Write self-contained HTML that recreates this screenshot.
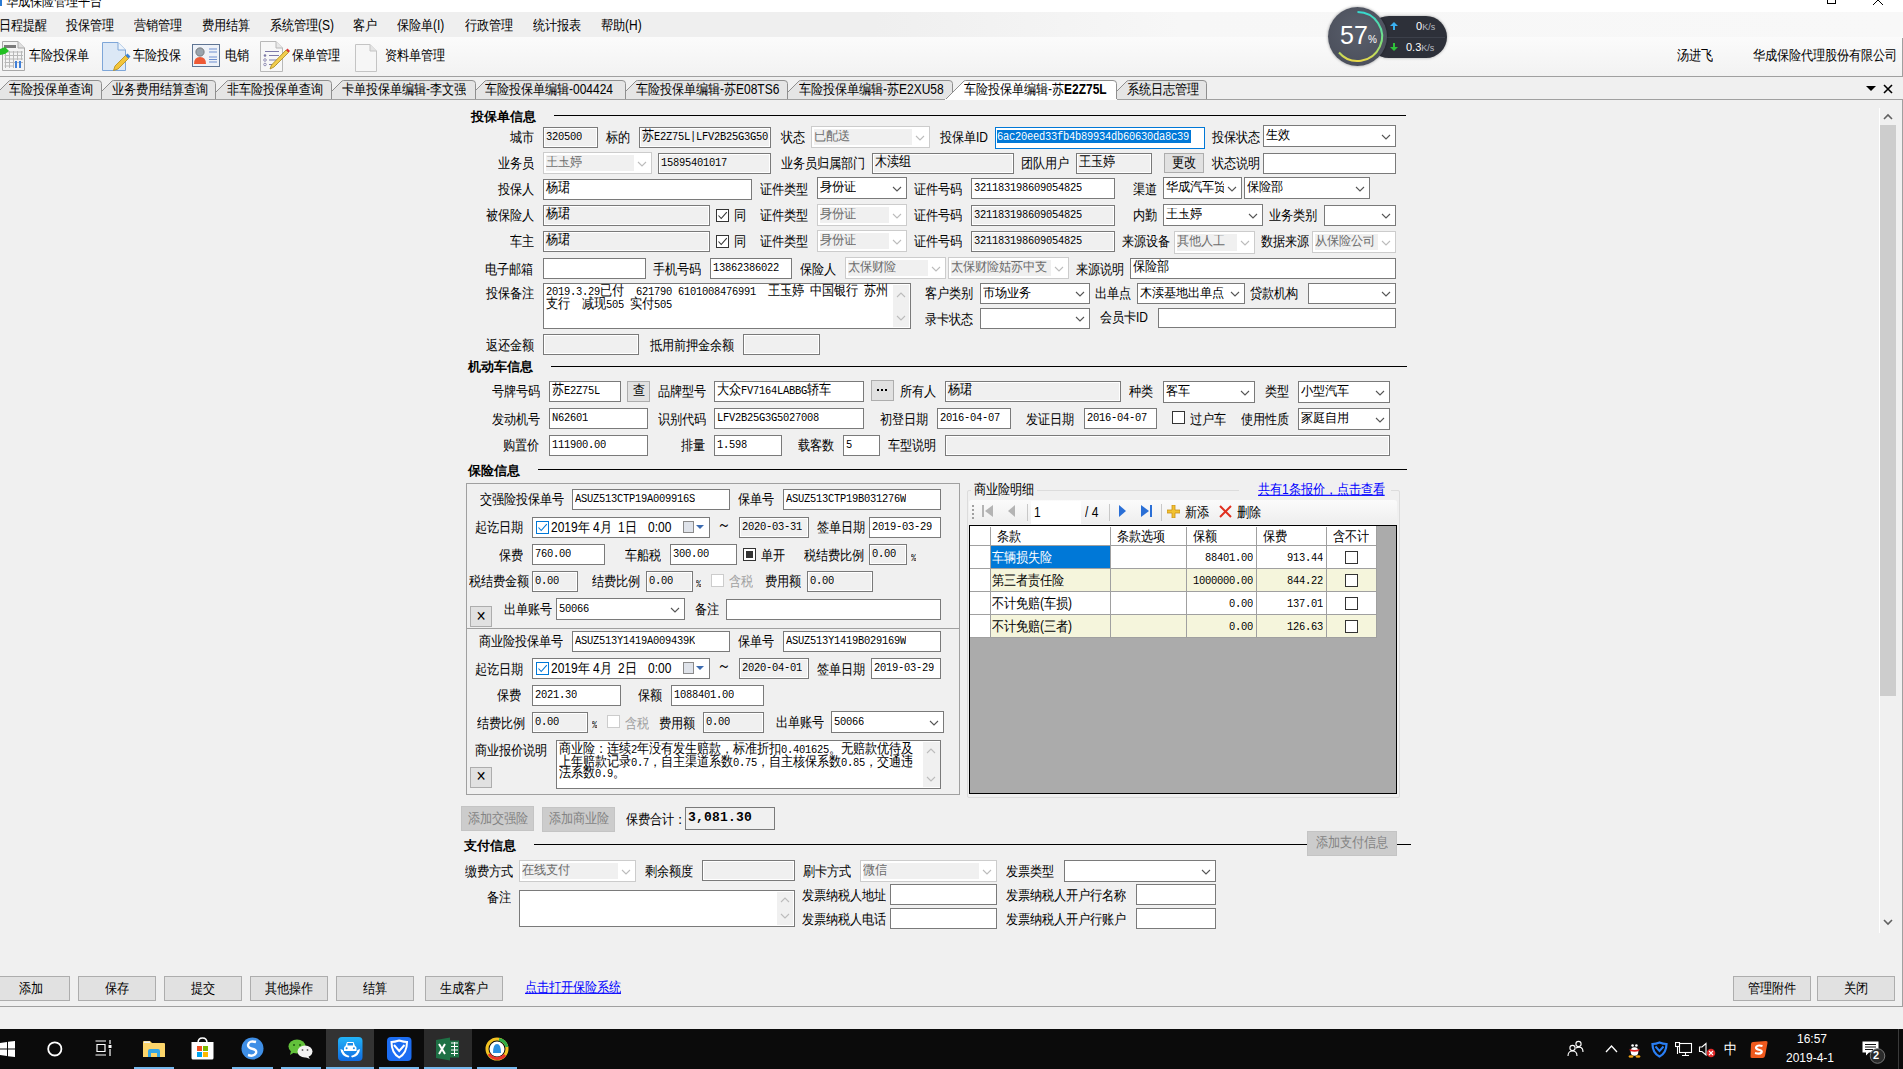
<!DOCTYPE html><html><head><meta charset="utf-8"><title>华成保险管理平台</title><style>
@font-face { font-family: "Liberation Mono"; src: local("Liberation Mono"), local("LiberationMono-Regular"); font-weight: normal; unicode-range: U+0020-007E; size-adjust: 83.4%; }
@font-face { font-family: "Liberation Mono"; src: local("Liberation Mono Bold"), local("LiberationMono-Bold"); font-weight: bold; unicode-range: U+0020-007E; size-adjust: 83.4%; }
html,body{margin:0;padding:0}
body{width:1903px;height:1069px;overflow:hidden;position:relative;background:#f0f0f0;
 font-family:"Liberation Sans",sans-serif;font-size:12px;color:#000}
.a{position:absolute;box-sizing:border-box}
div.a{white-space:pre}
.l{font-family:"Liberation Sans",sans-serif;font-size:12px;line-height:14px;transform:scaleY(1.15);transform-origin:0 50%}
.m{font-family:"Liberation Mono","Liberation Sans",sans-serif;font-size:12px;line-height:14px;transform:scaleY(1.15);transform-origin:0 50%}
.b{font-family:"Liberation Sans",sans-serif;font-size:13px;line-height:14px;font-weight:bold}
.u{text-decoration:underline;color:#0000ff}
</style></head><body><div class="a" style="left:0px;top:0px;width:1903px;height:12px;background:#ffffff;"></div>
<div class="a" style="left:0px;top:0px;width:2px;height:6px;background:#2a7bd4;"></div>
<div class="a l" style="left:6px;top:-6px;font-size:12px">华成保险管理平台</div>
<div class="a" style="left:1827px;top:-4px;width:9px;height:8px;border:1px solid #000"></div>
<svg class="a" style="left:1872px;top:-6px" width="12" height="12"><path d="M1,1 L11,11 M11,1 L1,11" stroke="#000" stroke-width="1"/></svg>
<div class="a" style="left:0;top:12px;width:1903px;height:25px;background:linear-gradient(to right,#efefef 0%,#efefef 46%,#f7f7f7 62%,#f8f8f8 100%)"></div>
<div class="a l" style="left:-1px;top:18px;">日程提醒</div>
<div class="a l" style="left:66px;top:18px;">投保管理</div>
<div class="a l" style="left:134px;top:18px;">营销管理</div>
<div class="a l" style="left:202px;top:18px;">费用结算</div>
<div class="a l" style="left:270px;top:18px;">系统管理(S)</div>
<div class="a l" style="left:353px;top:18px;">客户</div>
<div class="a l" style="left:397px;top:18px;">保险单(I)</div>
<div class="a l" style="left:465px;top:18px;">行政管理</div>
<div class="a l" style="left:533px;top:18px;">统计报表</div>
<div class="a l" style="left:601px;top:18px;">帮助(H)</div>
<div class="a" style="left:0;top:37px;width:1903px;height:39px;background:linear-gradient(#fbfbfb,#f2f2f2)"></div>
<div class="a" style="left:0px;top:76px;width:1903px;height:1px;background:#a0a0a0;"></div>
<div class="a l" style="left:29px;top:48px;">车险投保单</div>
<div class="a l" style="left:133px;top:48px;">车险投保</div>
<div class="a l" style="left:225px;top:48px;">电销</div>
<div class="a l" style="left:292px;top:48px;">保单管理</div>
<div class="a l" style="left:385px;top:48px;">资料单管理</div>
<div class="a l" style="left:1677px;top:48px;">汤进飞</div>
<div class="a l" style="left:1753px;top:48px;">华成保险代理股份有限公司</div>
<div class="a" style="left:1902px;top:38px;width:1px;height:969px;background:#a0a0a0;"></div>
<svg class="a" style="left:0px;top:40px" width="26" height="33"><path d="M2.5,1.5 H18 L24.5,8 V30.5 H2.5 Z" fill="#f4f4f4" stroke="#a8a8a8"/><path d="M18,1.5 V8 H24.5" fill="#e0e0e0" stroke="#a8a8a8"/><rect x="4" y="5" width="12" height="3" fill="#7a7a7a"/><g stroke="#b8b8b8" stroke-width="1"><path d="M4.5,12 H23 M4.5,15.5 H23 M4.5,19 H23 M4.5,22.5 H23 M4.5,26 H14"/><path d="M5.5,11 V28 M9.5,11 V28 M13.5,11 V28 M17.5,11 V20 M21.5,11 V20"/></g><rect x="15" y="21" width="2" height="7" fill="#3f7fd8"/><rect x="19" y="21" width="2" height="7" fill="#3f7fd8"/><path d="M0,9 L5,7 L9,11 L5,14 L0,15 Z" fill="#22c022"/></svg>
<svg class="a" style="left:101px;top:41px" width="31" height="31"><path d="M1.5,1.5 H17 L24.5,9 V29.5 H1.5 Z" fill="#dce8f6" stroke="#7ea6d8"/><path d="M17,1.5 V9 H24.5" fill="#eef4fb" stroke="#7ea6d8"/><path d="M12.5,29.5 L14,25 L24.5,14.5 L27.5,17.5 L17,28 Z" fill="#f3c53a" stroke="#b58a12" stroke-width="0.8"/><path d="M24.5,14.5 L26.5,12.5 L29.5,15.5 L27.5,17.5 Z" fill="#3b82d6"/></svg>
<svg class="a" style="left:192px;top:44px" width="29" height="24"><rect x="0.5" y="0.5" width="27" height="22" fill="#eef2f8" stroke="#5f7594"/><circle cx="8" cy="8" r="4.2" fill="#9aa4ad" stroke="#555" stroke-width="0.6"/><path d="M2,20 Q2,13 8,13 Q14,13 14,20 Z" fill="#ee5a36"/><g stroke="#6f8fd0" stroke-width="1"><path d="M17,5 H25 M17,8 H25 M17,13 H25 M17,15.5 H25 M17,18 H25"/></g></svg>
<svg class="a" style="left:259px;top:40px" width="32" height="33"><path d="M1.5,1.5 H17 L23.5,8 V31.5 H1.5 Z" fill="#f7f7f7" stroke="#b8b8b8"/><path d="M17,1.5 V8 H23.5" fill="#e8e8e8" stroke="#b8b8b8"/><g stroke="#7d7aa8" stroke-width="1.2"><path d="M6,11.5 H20 M10,15.5 H20 M10,20 H18 M10,24.5 H18"/></g><circle cx="6" cy="15.5" r="1.3" fill="#7d7aa8"/><circle cx="6" cy="20" r="1.3" fill="none" stroke="#7d7aa8" stroke-width="0.8"/><circle cx="6" cy="24.5" r="1.3" fill="none" stroke="#7d7aa8" stroke-width="0.8"/><path d="M11,29 L12.5,25 L27,10 L29.5,12.5 L15,27 Z" fill="#f1cd4e" stroke="#a8861a" stroke-width="0.8"/><path d="M27,10 L28.5,8.5 L31,11 L29.5,12.5 Z" fill="#d33"/></svg>
<svg class="a" style="left:354px;top:43px" width="25" height="30"><path d="M1.5,1.5 H16 L22.5,8 V28.5 H1.5 Z" fill="#f6f6f6" stroke="#c4c4c4"/><path d="M16,1.5 V8 H22.5" fill="#e4e4e4" stroke="#c4c4c4"/></svg>
<div class="a" style="left:1368px;top:16px;width:79px;height:42px;border-radius:21px;background:#2d3039;box-shadow:0 0 3px rgba(0,0,0,0.35)"></div>
<div class="a" style="left:1384px;top:37px;width:61px;height:1px;background:#3c404a;"></div>
<div class="a" style="left:1328px;top:7px;width:59px;height:59px;border-radius:50%;background:radial-gradient(circle at 50% 40%,#5a5f6c,#474b57);box-shadow:0 0 3px rgba(0,0,0,0.4)"></div>
<svg class="a" style="left:1328px;top:7px" width="59" height="59"><defs><linearGradient id="ag" x1="0" y1="0" x2="0" y2="1"><stop offset="0" stop-color="#35d9d0"/><stop offset="0.6" stop-color="#7de07a"/><stop offset="1" stop-color="#e8d84a"/></linearGradient></defs><path d="M29.5,5 A24.5,24.5 0 1 1 11,45.5" fill="none" stroke="url(#ag)" stroke-width="2"/></svg>
<div class="a" style="left:1340px;top:21px;font-family:'Liberation Sans',sans-serif;font-size:25px;line-height:28px;color:#fff;font-weight:normal">57</div>
<div class="a" style="left:1368px;top:34px;font-family:'Liberation Sans',sans-serif;font-size:10px;line-height:12px;color:#fff">%</div>
<svg class="a" style="left:1390px;top:22px" width="8" height="8"><path d="M4,0 L8,4 H5 V8 H3 V4 H0 Z" fill="#3ab0f0"/></svg>
<svg class="a" style="left:1390px;top:43px" width="8" height="8"><path d="M4,8 L8,4 H5 V0 H3 V4 H0 Z" fill="#2fc23a"/></svg>
<div class="a" style="left:1416px;top:20px;font-family:'Liberation Sans',sans-serif;font-size:11px;line-height:13px;color:#fff">0<span style="font-size:9px;color:#b8bcc4">K/s</span></div>
<div class="a" style="left:1406px;top:41px;font-family:'Liberation Sans',sans-serif;font-size:11px;line-height:13px;color:#fff">0.3<span style="font-size:9px;color:#b8bcc4">K/s</span></div>
<div class="a" style="left:0px;top:77px;width:1903px;height:23px;background:#f0f0f0;"></div>
<svg class="a" style="left:1108px;top:79px" width="100" height="22"><path d="M0.5,20.5 L18,3 Q19,1.5 20.5,1.5 L95,1.5 Q98.5,1.5 98.5,4.5 L98.5,20.5 Z" fill="#e5e5e5" stroke="none"/><path d="M0.5,20.5 L18,3 Q19,1.5 20.5,1.5 L95,1.5 Q98.5,1.5 98.5,4.5 L98.5,20.5" fill="none" stroke="#8f8f8f" stroke-width="1"/></svg>
<div class="a l" style="left:1127px;top:82px;">系统日志管理</div>
<svg class="a" style="left:780px;top:79px" width="174" height="22"><path d="M0.5,20.5 L18,3 Q19,1.5 20.5,1.5 L169,1.5 Q172.5,1.5 172.5,4.5 L172.5,20.5 Z" fill="#e5e5e5" stroke="none"/><path d="M0.5,20.5 L18,3 Q19,1.5 20.5,1.5 L169,1.5 Q172.5,1.5 172.5,4.5 L172.5,20.5" fill="none" stroke="#8f8f8f" stroke-width="1"/></svg>
<div class="a l" style="left:799px;top:82px;">车险投保单编辑-苏E2XU58</div>
<svg class="a" style="left:617px;top:79px" width="172" height="22"><path d="M0.5,20.5 L18,3 Q19,1.5 20.5,1.5 L167,1.5 Q170.5,1.5 170.5,4.5 L170.5,20.5 Z" fill="#e5e5e5" stroke="none"/><path d="M0.5,20.5 L18,3 Q19,1.5 20.5,1.5 L167,1.5 Q170.5,1.5 170.5,4.5 L170.5,20.5" fill="none" stroke="#8f8f8f" stroke-width="1"/></svg>
<div class="a l" style="left:636px;top:82px;">车险投保单编辑-苏E08TS6</div>
<svg class="a" style="left:466px;top:79px" width="161" height="22"><path d="M0.5,20.5 L18,3 Q19,1.5 20.5,1.5 L156,1.5 Q159.5,1.5 159.5,4.5 L159.5,20.5 Z" fill="#e5e5e5" stroke="none"/><path d="M0.5,20.5 L18,3 Q19,1.5 20.5,1.5 L156,1.5 Q159.5,1.5 159.5,4.5 L159.5,20.5" fill="none" stroke="#8f8f8f" stroke-width="1"/></svg>
<div class="a l" style="left:485px;top:82px;">车险投保单编辑-004424</div>
<svg class="a" style="left:323px;top:79px" width="154" height="22"><path d="M0.5,20.5 L18,3 Q19,1.5 20.5,1.5 L149,1.5 Q152.5,1.5 152.5,4.5 L152.5,20.5 Z" fill="#e5e5e5" stroke="none"/><path d="M0.5,20.5 L18,3 Q19,1.5 20.5,1.5 L149,1.5 Q152.5,1.5 152.5,4.5 L152.5,20.5" fill="none" stroke="#8f8f8f" stroke-width="1"/></svg>
<div class="a l" style="left:342px;top:82px;">卡单投保单编辑-李文强</div>
<svg class="a" style="left:208px;top:79px" width="125" height="22"><path d="M0.5,20.5 L18,3 Q19,1.5 20.5,1.5 L120,1.5 Q123.5,1.5 123.5,4.5 L123.5,20.5 Z" fill="#e5e5e5" stroke="none"/><path d="M0.5,20.5 L18,3 Q19,1.5 20.5,1.5 L120,1.5 Q123.5,1.5 123.5,4.5 L123.5,20.5" fill="none" stroke="#8f8f8f" stroke-width="1"/></svg>
<div class="a l" style="left:227px;top:82px;">非车险投保单查询</div>
<svg class="a" style="left:93px;top:79px" width="124" height="22"><path d="M0.5,20.5 L18,3 Q19,1.5 20.5,1.5 L119,1.5 Q122.5,1.5 122.5,4.5 L122.5,20.5 Z" fill="#e5e5e5" stroke="none"/><path d="M0.5,20.5 L18,3 Q19,1.5 20.5,1.5 L119,1.5 Q122.5,1.5 122.5,4.5 L122.5,20.5" fill="none" stroke="#8f8f8f" stroke-width="1"/></svg>
<div class="a l" style="left:112px;top:82px;">业务费用结算查询</div>
<svg class="a" style="left:-10px;top:79px" width="113" height="22"><path d="M0.5,20.5 L18,3 Q19,1.5 20.5,1.5 L108,1.5 Q111.5,1.5 111.5,4.5 L111.5,20.5 Z" fill="#e5e5e5" stroke="none"/><path d="M0.5,20.5 L18,3 Q19,1.5 20.5,1.5 L108,1.5 Q111.5,1.5 111.5,4.5 L111.5,20.5" fill="none" stroke="#8f8f8f" stroke-width="1"/></svg>
<div class="a l" style="left:9px;top:82px;">车险投保单查询</div>
<svg class="a" style="left:945px;top:79px" width="173" height="22"><path d="M0.5,20.5 L18,3 Q19,1.5 20.5,1.5 L168,1.5 Q171.5,1.5 171.5,4.5 L171.5,20.5 Z" fill="#ffffff" stroke="none"/><path d="M0.5,20.5 L18,3 Q19,1.5 20.5,1.5 L168,1.5 Q171.5,1.5 171.5,4.5 L171.5,20.5" fill="none" stroke="#8f8f8f" stroke-width="1"/></svg>
<div class="a l" style="left:964px;top:82px">车险投保单编辑-苏<b>E2Z75L</b></div>
<div class="a" style="left:0px;top:99px;width:1903px;height:1px;background:#a0a0a0;"></div>
<div class="a" style="left:945px;top:99px;width:172px;height:1px;background:#ffffff;"></div>
<svg class="a" style="left:1866px;top:86px" width="10" height="6"><path d="M0,0 L10,0 L5,5 Z" fill="#000"/></svg>
<svg class="a" style="left:1883px;top:84px" width="10" height="10"><path d="M1,1 L9,9 M9,1 L1,9" stroke="#000" stroke-width="1.6"/></svg>
<div class="a b" style="left:471px;top:110px;">投保单信息</div>
<div class="a" style="left:554px;top:115px;width:852px;height:1px;background:#000;"></div>
<div class="a l" style="left:510px;top:130px;">城市</div>
<div class="a" style="left:543px;top:127px;width:55px;height:21px;background:#f0f0f0;border:1px solid #7a7a7a;box-shadow:inset 0 0 0 1px #fff"></div>
<div class="a m" style="left:546px;top:131px;">320500</div>
<div class="a l" style="left:606px;top:130px;">标的</div>
<div class="a" style="left:639px;top:127px;width:132px;height:21px;background:#f0f0f0;border:1px solid #7a7a7a;box-shadow:inset 0 0 0 1px #fff"></div>
<div class="a m" style="left:642px;top:131px;">苏E2Z75L|LFV2B25G3G50</div>
<div class="a l" style="left:781px;top:130px;">状态</div>
<div class="a" style="left:811px;top:126px;width:119px;height:22px;background:#fff;border:1px solid #cccccc;"></div>
<div class="a" style="left:814px;top:129px;width:98px;height:16px;background:#f0f0f0;"></div>
<svg class="a" style="left:915.0px;top:134.5px" width="10" height="7"><polyline points="1,1 5.0,5 9,1" fill="none" stroke="#bcbcbc" stroke-width="1.1"/></svg>
<div class="a m" style="left:814px;top:131px;color:#6d6d6d;max-width:98px;overflow:hidden">已配送</div>
<div class="a l" style="left:940px;top:130px;">投保单ID</div>
<div class="a" style="left:995px;top:127px;width:210px;height:22px;background:#fff;border:1px solid #0078d7;"></div>
<div class="a" style="left:997px;top:130px;width:194px;height:13px;background:#0078d7;"></div>
<div class="a m" style="left:997px;top:131px;color:#fff;">6ac20eed33fb4b89934db60630da8c39</div>
<div class="a l" style="left:1212px;top:130px;">投保状态</div>
<div class="a" style="left:1263px;top:125px;width:133px;height:22px;background:#fff;border:1px solid #7a7a7a;"></div>
<svg class="a" style="left:1381.0px;top:133.5px" width="10" height="7"><polyline points="1,1 5.0,5 9,1" fill="none" stroke="#555" stroke-width="1.1"/></svg>
<div class="a m" style="left:1266px;top:130px;max-width:112px;overflow:hidden">生效</div>
<div class="a l" style="left:498px;top:156px;">业务员</div>
<div class="a" style="left:543px;top:152px;width:109px;height:22px;background:#fff;border:1px solid #cccccc;"></div>
<div class="a" style="left:546px;top:155px;width:88px;height:16px;background:#f0f0f0;"></div>
<svg class="a" style="left:637.0px;top:160.5px" width="10" height="7"><polyline points="1,1 5.0,5 9,1" fill="none" stroke="#bcbcbc" stroke-width="1.1"/></svg>
<div class="a m" style="left:546px;top:157px;color:#6d6d6d;max-width:88px;overflow:hidden">王玉婷</div>
<div class="a" style="left:658px;top:153px;width:113px;height:21px;background:#f0f0f0;border:1px solid #7a7a7a;box-shadow:inset 0 0 0 1px #fff"></div>
<div class="a m" style="left:661px;top:157px;">15895401017</div>
<div class="a l" style="left:781px;top:156px;">业务员归属部门</div>
<div class="a" style="left:872px;top:153px;width:142px;height:21px;background:#f0f0f0;border:1px solid #7a7a7a;box-shadow:inset 0 0 0 1px #fff"></div>
<div class="a m" style="left:875px;top:157px;">木渎组</div>
<div class="a l" style="left:1021px;top:156px;">团队用户</div>
<div class="a" style="left:1076px;top:153px;width:76px;height:21px;background:#f0f0f0;border:1px solid #7a7a7a;box-shadow:inset 0 0 0 1px #fff"></div>
<div class="a m" style="left:1079px;top:157px;">王玉婷</div>
<div class="a" style="left:1164px;top:153px;width:40px;height:20px;background:#e1e1e1;border:1px solid #adadad;"></div>
<div class="a l" style="left:1164px;top:155px;width:40px;text-align:center;color:#000">更改</div>
<div class="a l" style="left:1212px;top:156px;">状态说明</div>
<div class="a" style="left:1263px;top:153px;width:133px;height:21px;background:#fff;border:1px solid #7a7a7a;"></div>
<div class="a l" style="left:498px;top:182px;">投保人</div>
<div class="a" style="left:543px;top:179px;width:209px;height:21px;background:#fff;border:1px solid #7a7a7a;"></div>
<div class="a m" style="left:546px;top:183px;">杨珺</div>
<div class="a l" style="left:760px;top:182px;">证件类型</div>
<div class="a" style="left:817px;top:177px;width:90px;height:22px;background:#fff;border:1px solid #7a7a7a;"></div>
<svg class="a" style="left:892.0px;top:185.5px" width="10" height="7"><polyline points="1,1 5.0,5 9,1" fill="none" stroke="#555" stroke-width="1.1"/></svg>
<div class="a m" style="left:820px;top:182px;max-width:69px;overflow:hidden">身份证</div>
<div class="a l" style="left:914px;top:182px;">证件号码</div>
<div class="a" style="left:971px;top:178px;width:144px;height:21px;background:#fff;border:1px solid #7a7a7a;"></div>
<div class="a m" style="left:974px;top:182px;">321183198609054825</div>
<div class="a l" style="left:1133px;top:182px;">渠道</div>
<div class="a" style="left:1163px;top:177px;width:79px;height:22px;background:#fff;border:1px solid #7a7a7a;"></div>
<svg class="a" style="left:1227.0px;top:185.5px" width="10" height="7"><polyline points="1,1 5.0,5 9,1" fill="none" stroke="#555" stroke-width="1.1"/></svg>
<div class="a m" style="left:1166px;top:182px;max-width:58px;overflow:hidden">华成汽车贸</div>
<div class="a" style="left:1244px;top:177px;width:126px;height:22px;background:#fff;border:1px solid #7a7a7a;"></div>
<svg class="a" style="left:1355.0px;top:185.5px" width="10" height="7"><polyline points="1,1 5.0,5 9,1" fill="none" stroke="#555" stroke-width="1.1"/></svg>
<div class="a m" style="left:1247px;top:182px;max-width:105px;overflow:hidden">保险部</div>
<div class="a l" style="left:486px;top:208px;">被保险人</div>
<div class="a" style="left:543px;top:205px;width:167px;height:21px;background:#f0f0f0;border:1px solid #7a7a7a;box-shadow:inset 0 0 0 1px #fff"></div>
<div class="a m" style="left:546px;top:209px;">杨珺</div>
<div class="a" style="left:716px;top:209px;width:13px;height:13px;border:1px solid #333;background:#fff"></div>
<svg class="a" style="left:716px;top:209px" width="13" height="13"><polyline points="2.5,6.5 5.2,9.5 10.8,3.2" fill="none" stroke="#333" stroke-width="1.1"/></svg>
<div class="a l" style="left:734px;top:208px;">同</div>
<div class="a l" style="left:760px;top:208px;">证件类型</div>
<div class="a" style="left:817px;top:204px;width:90px;height:22px;background:#fff;border:1px solid #cccccc;"></div>
<div class="a" style="left:820px;top:207px;width:69px;height:16px;background:#f0f0f0;"></div>
<svg class="a" style="left:892.0px;top:212.5px" width="10" height="7"><polyline points="1,1 5.0,5 9,1" fill="none" stroke="#bcbcbc" stroke-width="1.1"/></svg>
<div class="a m" style="left:820px;top:209px;color:#6d6d6d;max-width:69px;overflow:hidden">身份证</div>
<div class="a l" style="left:914px;top:208px;">证件号码</div>
<div class="a" style="left:971px;top:205px;width:144px;height:21px;background:#f0f0f0;border:1px solid #7a7a7a;box-shadow:inset 0 0 0 1px #fff"></div>
<div class="a m" style="left:974px;top:209px;">321183198609054825</div>
<div class="a l" style="left:1133px;top:208px;">内勤</div>
<div class="a" style="left:1163px;top:204px;width:100px;height:22px;background:#fff;border:1px solid #7a7a7a;"></div>
<svg class="a" style="left:1248.0px;top:212.5px" width="10" height="7"><polyline points="1,1 5.0,5 9,1" fill="none" stroke="#555" stroke-width="1.1"/></svg>
<div class="a m" style="left:1166px;top:209px;max-width:79px;overflow:hidden">王玉婷</div>
<div class="a l" style="left:1269px;top:208px;">业务类别</div>
<div class="a" style="left:1324px;top:205px;width:72px;height:21px;background:#fff;border:1px solid #7a7a7a;"></div>
<svg class="a" style="left:1381.0px;top:213.0px" width="10" height="7"><polyline points="1,1 5.0,5 9,1" fill="none" stroke="#555" stroke-width="1.1"/></svg>
<div class="a l" style="left:510px;top:234px;">车主</div>
<div class="a" style="left:543px;top:231px;width:167px;height:21px;background:#f0f0f0;border:1px solid #7a7a7a;box-shadow:inset 0 0 0 1px #fff"></div>
<div class="a m" style="left:546px;top:235px;">杨珺</div>
<div class="a" style="left:716px;top:235px;width:13px;height:13px;border:1px solid #333;background:#fff"></div>
<svg class="a" style="left:716px;top:235px" width="13" height="13"><polyline points="2.5,6.5 5.2,9.5 10.8,3.2" fill="none" stroke="#333" stroke-width="1.1"/></svg>
<div class="a l" style="left:734px;top:234px;">同</div>
<div class="a l" style="left:760px;top:234px;">证件类型</div>
<div class="a" style="left:817px;top:230px;width:90px;height:22px;background:#fff;border:1px solid #cccccc;"></div>
<div class="a" style="left:820px;top:233px;width:69px;height:16px;background:#f0f0f0;"></div>
<svg class="a" style="left:892.0px;top:238.5px" width="10" height="7"><polyline points="1,1 5.0,5 9,1" fill="none" stroke="#bcbcbc" stroke-width="1.1"/></svg>
<div class="a m" style="left:820px;top:235px;color:#6d6d6d;max-width:69px;overflow:hidden">身份证</div>
<div class="a l" style="left:914px;top:234px;">证件号码</div>
<div class="a" style="left:971px;top:231px;width:144px;height:21px;background:#f0f0f0;border:1px solid #7a7a7a;box-shadow:inset 0 0 0 1px #fff"></div>
<div class="a m" style="left:974px;top:235px;">321183198609054825</div>
<div class="a l" style="left:1122px;top:234px;">来源设备</div>
<div class="a" style="left:1174px;top:231px;width:81px;height:23px;background:#fff;border:1px solid #cccccc;"></div>
<div class="a" style="left:1177px;top:234px;width:60px;height:17px;background:#f0f0f0;"></div>
<svg class="a" style="left:1240.0px;top:240.0px" width="10" height="7"><polyline points="1,1 5.0,5 9,1" fill="none" stroke="#bcbcbc" stroke-width="1.1"/></svg>
<div class="a m" style="left:1177px;top:236px;color:#6d6d6d;max-width:60px;overflow:hidden">其他人工</div>
<div class="a l" style="left:1261px;top:234px;">数据来源</div>
<div class="a" style="left:1312px;top:231px;width:84px;height:22px;background:#fff;border:1px solid #cccccc;"></div>
<div class="a" style="left:1315px;top:234px;width:63px;height:16px;background:#f0f0f0;"></div>
<svg class="a" style="left:1381.0px;top:239.5px" width="10" height="7"><polyline points="1,1 5.0,5 9,1" fill="none" stroke="#bcbcbc" stroke-width="1.1"/></svg>
<div class="a m" style="left:1315px;top:236px;color:#6d6d6d;max-width:63px;overflow:hidden">从保险公司</div>
<div class="a l" style="left:485px;top:262px;">电子邮箱</div>
<div class="a" style="left:543px;top:258px;width:103px;height:21px;background:#fff;border:1px solid #7a7a7a;"></div>
<div class="a l" style="left:653px;top:262px;">手机号码</div>
<div class="a" style="left:710px;top:258px;width:82px;height:21px;background:#fff;border:1px solid #7a7a7a;"></div>
<div class="a m" style="left:713px;top:262px;">13862386022</div>
<div class="a l" style="left:800px;top:262px;">保险人</div>
<div class="a" style="left:845px;top:257px;width:101px;height:22px;background:#fff;border:1px solid #cccccc;"></div>
<div class="a" style="left:848px;top:260px;width:80px;height:16px;background:#f0f0f0;"></div>
<svg class="a" style="left:931.0px;top:265.5px" width="10" height="7"><polyline points="1,1 5.0,5 9,1" fill="none" stroke="#bcbcbc" stroke-width="1.1"/></svg>
<div class="a m" style="left:848px;top:262px;color:#6d6d6d;max-width:80px;overflow:hidden">太保财险</div>
<div class="a" style="left:948px;top:257px;width:121px;height:22px;background:#fff;border:1px solid #cccccc;"></div>
<div class="a" style="left:951px;top:260px;width:100px;height:16px;background:#f0f0f0;"></div>
<svg class="a" style="left:1054.0px;top:265.5px" width="10" height="7"><polyline points="1,1 5.0,5 9,1" fill="none" stroke="#bcbcbc" stroke-width="1.1"/></svg>
<div class="a m" style="left:951px;top:262px;color:#6d6d6d;max-width:100px;overflow:hidden">太保财险姑苏中支</div>
<div class="a l" style="left:1076px;top:262px;">来源说明</div>
<div class="a" style="left:1130px;top:258px;width:266px;height:21px;background:#fff;border:1px solid #7a7a7a;"></div>
<div class="a m" style="left:1133px;top:262px;">保险部</div>
<div class="a l" style="left:486px;top:286px;">投保备注</div>
<div class="a" style="left:543px;top:283px;width:368px;height:46px;background:#fff;border:1px solid #7a7a7a;"></div>
<div class="a m" style="left:546px;top:286px;line-height:11px;width:345px;white-space:pre-wrap;transform-origin:0 0">2019.3.29已付  621790 6101008476991  王玉婷 中国银行 苏州
支行  减现505 实付505</div>
<div class="a" style="left:893px;top:285px;width:16px;height:42px;background:#f0f0f0;"></div>
<svg class="a" style="left:895.5px;top:292.0px" width="10" height="7"><polyline points="1,5 5.0,1 9,5" fill="none" stroke="#bcbcbc" stroke-width="1.1"/></svg>
<svg class="a" style="left:896px;top:315px" width="10" height="6"><polyline points="1,1 5,5 9,1" fill="none" stroke="#bcbcbc" stroke-width="1.1"/></svg>
<div class="a l" style="left:925px;top:286px;">客户类别</div>
<div class="a" style="left:980px;top:283px;width:110px;height:21px;background:#fff;border:1px solid #7a7a7a;"></div>
<svg class="a" style="left:1075.0px;top:291.0px" width="10" height="7"><polyline points="1,1 5.0,5 9,1" fill="none" stroke="#555" stroke-width="1.1"/></svg>
<div class="a m" style="left:983px;top:288px;max-width:89px;overflow:hidden">市场业务</div>
<div class="a l" style="left:1095px;top:286px;">出单点</div>
<div class="a" style="left:1137px;top:283px;width:108px;height:21px;background:#fff;border:1px solid #7a7a7a;"></div>
<svg class="a" style="left:1230.0px;top:291.0px" width="10" height="7"><polyline points="1,1 5.0,5 9,1" fill="none" stroke="#555" stroke-width="1.1"/></svg>
<div class="a m" style="left:1140px;top:288px;max-width:87px;overflow:hidden">木渎基地出单点</div>
<div class="a l" style="left:1250px;top:286px;">贷款机构</div>
<div class="a" style="left:1308px;top:283px;width:88px;height:21px;background:#fff;border:1px solid #7a7a7a;"></div>
<svg class="a" style="left:1381.0px;top:291.0px" width="10" height="7"><polyline points="1,1 5.0,5 9,1" fill="none" stroke="#555" stroke-width="1.1"/></svg>
<div class="a l" style="left:925px;top:312px;">录卡状态</div>
<div class="a" style="left:980px;top:308px;width:110px;height:21px;background:#fff;border:1px solid #7a7a7a;"></div>
<svg class="a" style="left:1075.0px;top:316.0px" width="10" height="7"><polyline points="1,1 5.0,5 9,1" fill="none" stroke="#555" stroke-width="1.1"/></svg>
<div class="a l" style="left:1100px;top:310px;">会员卡ID</div>
<div class="a" style="left:1158px;top:308px;width:238px;height:20px;background:#fff;border:1px solid #7a7a7a;"></div>
<div class="a l" style="left:486px;top:338px;">返还金额</div>
<div class="a" style="left:543px;top:334px;width:96px;height:21px;background:#f0f0f0;border:1px solid #7a7a7a;box-shadow:inset 0 0 0 1px #fff"></div>
<div class="a l" style="left:650px;top:338px;">抵用前押金余额</div>
<div class="a" style="left:743px;top:334px;width:77px;height:21px;background:#f0f0f0;border:1px solid #7a7a7a;box-shadow:inset 0 0 0 1px #fff"></div>
<div class="a b" style="left:468px;top:360px;">机动车信息</div>
<div class="a" style="left:551px;top:366px;width:856px;height:1px;background:#000;"></div>
<div class="a l" style="left:492px;top:384px;">号牌号码</div>
<div class="a" style="left:549px;top:381px;width:72px;height:21px;background:#fff;border:1px solid #7a7a7a;"></div>
<div class="a m" style="left:552px;top:385px;">苏E2Z75L</div>
<div class="a" style="left:627px;top:381px;width:23px;height:21px;background:#e1e1e1;border:1px solid #adadad;"></div>
<div class="a l" style="left:627px;top:383px;width:23px;text-align:center;color:#000">查</div>
<div class="a l" style="left:658px;top:384px;">品牌型号</div>
<div class="a" style="left:714px;top:381px;width:150px;height:21px;background:#fff;border:1px solid #7a7a7a;"></div>
<div class="a m" style="left:717px;top:385px;">大众FV7164LABBG轿车</div>
<div class="a" style="left:871px;top:380px;width:23px;height:21px;background:#e1e1e1;border:1px solid #adadad;"></div>
<div class="a l" style="left:871px;top:383px;width:23px;text-align:center;color:#000"></div>
<div class="a" style="left:877px;top:389px;width:2px;height:2px;background:#000;"></div>
<div class="a" style="left:881px;top:389px;width:2px;height:2px;background:#000;"></div>
<div class="a" style="left:885px;top:389px;width:2px;height:2px;background:#000;"></div>
<div class="a l" style="left:900px;top:384px;">所有人</div>
<div class="a" style="left:945px;top:381px;width:176px;height:21px;background:#f0f0f0;border:1px solid #7a7a7a;box-shadow:inset 0 0 0 1px #fff"></div>
<div class="a m" style="left:948px;top:385px;">杨珺</div>
<div class="a l" style="left:1129px;top:384px;">种类</div>
<div class="a" style="left:1163px;top:381px;width:92px;height:22px;background:#fff;border:1px solid #7a7a7a;"></div>
<svg class="a" style="left:1240.0px;top:389.5px" width="10" height="7"><polyline points="1,1 5.0,5 9,1" fill="none" stroke="#555" stroke-width="1.1"/></svg>
<div class="a m" style="left:1166px;top:386px;max-width:71px;overflow:hidden">客车</div>
<div class="a l" style="left:1265px;top:384px;">类型</div>
<div class="a" style="left:1298px;top:381px;width:92px;height:22px;background:#fff;border:1px solid #7a7a7a;"></div>
<svg class="a" style="left:1375.0px;top:389.5px" width="10" height="7"><polyline points="1,1 5.0,5 9,1" fill="none" stroke="#555" stroke-width="1.1"/></svg>
<div class="a m" style="left:1301px;top:386px;max-width:71px;overflow:hidden">小型汽车</div>
<div class="a l" style="left:492px;top:412px;">发动机号</div>
<div class="a" style="left:549px;top:408px;width:99px;height:21px;background:#fff;border:1px solid #7a7a7a;"></div>
<div class="a m" style="left:552px;top:412px;">N62601</div>
<div class="a l" style="left:658px;top:412px;">识别代码</div>
<div class="a" style="left:714px;top:408px;width:150px;height:21px;background:#fff;border:1px solid #7a7a7a;"></div>
<div class="a m" style="left:717px;top:412px;">LFV2B25G3G5027008</div>
<div class="a l" style="left:880px;top:412px;">初登日期</div>
<div class="a" style="left:937px;top:408px;width:74px;height:21px;background:#fff;border:1px solid #7a7a7a;"></div>
<div class="a m" style="left:940px;top:412px;">2016-04-07</div>
<div class="a l" style="left:1026px;top:412px;">发证日期</div>
<div class="a" style="left:1084px;top:408px;width:73px;height:21px;background:#fff;border:1px solid #7a7a7a;"></div>
<div class="a m" style="left:1087px;top:412px;">2016-04-07</div>
<div class="a" style="left:1172px;top:411px;width:13px;height:13px;border:1px solid #333;background:#fff"></div>
<div class="a l" style="left:1190px;top:412px;">过户车</div>
<div class="a l" style="left:1241px;top:412px;">使用性质</div>
<div class="a" style="left:1298px;top:408px;width:92px;height:22px;background:#fff;border:1px solid #7a7a7a;"></div>
<svg class="a" style="left:1375.0px;top:416.5px" width="10" height="7"><polyline points="1,1 5.0,5 9,1" fill="none" stroke="#555" stroke-width="1.1"/></svg>
<div class="a m" style="left:1301px;top:413px;max-width:71px;overflow:hidden">家庭自用</div>
<div class="a l" style="left:503px;top:438px;">购置价</div>
<div class="a" style="left:549px;top:435px;width:99px;height:21px;background:#fff;border:1px solid #7a7a7a;"></div>
<div class="a m" style="left:552px;top:439px;">111900.00</div>
<div class="a l" style="left:681px;top:438px;">排量</div>
<div class="a" style="left:714px;top:435px;width:68px;height:21px;background:#fff;border:1px solid #7a7a7a;"></div>
<div class="a m" style="left:717px;top:439px;">1.598</div>
<div class="a l" style="left:798px;top:438px;">载客数</div>
<div class="a" style="left:843px;top:435px;width:37px;height:21px;background:#fff;border:1px solid #7a7a7a;"></div>
<div class="a m" style="left:846px;top:439px;">5</div>
<div class="a l" style="left:888px;top:438px;">车型说明</div>
<div class="a" style="left:945px;top:435px;width:445px;height:21px;background:#f0f0f0;border:1px solid #7a7a7a;box-shadow:inset 0 0 0 1px #fff"></div>
<div class="a b" style="left:468px;top:464px;">保险信息</div>
<div class="a" style="left:538px;top:469px;width:869px;height:1px;background:#000;"></div>
<div class="a" style="left:466px;top:483px;width:494px;height:312px;background:transparent;border:1px solid #a0a0a0;"></div>
<div class="a" style="left:466px;top:628px;width:494px;height:1px;background:#a0a0a0;"></div>
<div class="a l" style="left:480px;top:492px;">交强险投保单号</div>
<div class="a" style="left:572px;top:489px;width:158px;height:21px;background:#fff;border:1px solid #7a7a7a;"></div>
<div class="a m" style="left:575px;top:493px;">ASUZ513CTP19A009916S</div>
<div class="a l" style="left:738px;top:492px;">保单号</div>
<div class="a" style="left:783px;top:489px;width:158px;height:21px;background:#fff;border:1px solid #7a7a7a;"></div>
<div class="a m" style="left:786px;top:493px;">ASUZ513CTP19B031276W</div>
<div class="a l" style="left:475px;top:520px;">起讫日期</div>
<div class="a" style="left:532px;top:517px;width:178px;height:21px;background:#fff;border:1px solid #7a7a7a;"></div>
<div class="a" style="left:536px;top:521px;width:13px;height:13px;border:1px solid #0078d7;background:#fff"></div>
<svg class="a" style="left:536px;top:521px" width="13" height="13"><polyline points="2.5,6.5 5.2,9.5 10.8,3.2" fill="none" stroke="#0078d7" stroke-width="1.1"/></svg>
<div class="a l" style="left:551px;top:520px;">2019年</div>
<div class="a l" style="left:593px;top:520px;">4月</div>
<div class="a l" style="left:618px;top:520px;">1日</div>
<div class="a l" style="left:648px;top:520px;">0:00</div>
<div class="a" style="left:683px;top:521px;width:11px;height:12px;border:1px solid #8a8a8a;background:#dfe3ea"></div>
<svg class="a" style="left:696px;top:525px" width="8" height="5"><path d="M0,0 L8,0 L4,4 Z" fill="#3c6bb0"/></svg>
<div class="a l" style="left:717px;top:517px;font-size:14px">～</div>
<div class="a" style="left:739px;top:517px;width:70px;height:21px;background:#f0f0f0;border:1px solid #7a7a7a;box-shadow:inset 0 0 0 1px #fff"></div>
<div class="a m" style="left:742px;top:521px;">2020-03-31</div>
<div class="a l" style="left:817px;top:520px;">签单日期</div>
<div class="a" style="left:869px;top:517px;width:72px;height:21px;background:#fff;border:1px solid #7a7a7a;"></div>
<div class="a m" style="left:872px;top:521px;">2019-03-29</div>
<div class="a l" style="left:499px;top:548px;">保费</div>
<div class="a" style="left:532px;top:544px;width:73px;height:21px;background:#fff;border:1px solid #7a7a7a;"></div>
<div class="a m" style="left:535px;top:548px;">760.00</div>
<div class="a l" style="left:625px;top:548px;">车船税</div>
<div class="a" style="left:670px;top:544px;width:67px;height:21px;background:#fff;border:1px solid #7a7a7a;"></div>
<div class="a m" style="left:673px;top:548px;">300.00</div>
<div class="a" style="left:743px;top:548px;width:13px;height:13px;border:1px solid #333;background:#fff"></div>
<div class="a" style="left:746px;top:551px;width:7px;height:7px;background:#333;"></div>
<div class="a l" style="left:761px;top:548px;">单开</div>
<div class="a l" style="left:804px;top:548px;">税结费比例</div>
<div class="a" style="left:869px;top:544px;width:38px;height:21px;background:#f0f0f0;border:1px solid #7a7a7a;box-shadow:inset 0 0 0 1px #fff"></div>
<div class="a m" style="left:872px;top:548px;">0.00</div>
<div class="a m" style="left:911px;top:552px;font-size:10px">%</div>
<div class="a l" style="left:469px;top:574px;">税结费金额</div>
<div class="a" style="left:532px;top:571px;width:46px;height:21px;background:#f0f0f0;border:1px solid #7a7a7a;box-shadow:inset 0 0 0 1px #fff"></div>
<div class="a m" style="left:535px;top:575px;">0.00</div>
<div class="a l" style="left:592px;top:574px;">结费比例</div>
<div class="a" style="left:646px;top:571px;width:47px;height:21px;background:#f0f0f0;border:1px solid #7a7a7a;box-shadow:inset 0 0 0 1px #fff"></div>
<div class="a m" style="left:649px;top:575px;">0.00</div>
<div class="a m" style="left:696px;top:578px;font-size:10px">%</div>
<div class="a" style="left:711px;top:574px;width:13px;height:13px;border:1px solid #cccccc;background:#fff"></div>
<div class="a l" style="left:729px;top:574px;color:#a0a0a0;">含税</div>
<div class="a l" style="left:765px;top:574px;">费用额</div>
<div class="a" style="left:807px;top:571px;width:66px;height:21px;background:#f0f0f0;border:1px solid #7a7a7a;box-shadow:inset 0 0 0 1px #fff"></div>
<div class="a m" style="left:810px;top:575px;">0.00</div>
<div class="a" style="left:470px;top:606px;width:22px;height:21px;background:#e1e1e1;border:1px solid #adadad;"></div>
<div class="a l" style="left:470px;top:609px;width:22px;text-align:center;color:#000">✕</div>
<div class="a l" style="left:504px;top:602px;">出单账号</div>
<div class="a" style="left:556px;top:598px;width:129px;height:22px;background:#fff;border:1px solid #7a7a7a;"></div>
<svg class="a" style="left:670.0px;top:606.5px" width="10" height="7"><polyline points="1,1 5.0,5 9,1" fill="none" stroke="#555" stroke-width="1.1"/></svg>
<div class="a m" style="left:559px;top:603px;max-width:108px;overflow:hidden">50066</div>
<div class="a l" style="left:695px;top:602px;">备注</div>
<div class="a" style="left:726px;top:599px;width:215px;height:21px;background:#fff;border:1px solid #7a7a7a;"></div>
<div class="a l" style="left:479px;top:634px;">商业险投保单号</div>
<div class="a" style="left:572px;top:631px;width:158px;height:21px;background:#fff;border:1px solid #7a7a7a;"></div>
<div class="a m" style="left:575px;top:635px;">ASUZ513Y1419A009439K</div>
<div class="a l" style="left:738px;top:634px;">保单号</div>
<div class="a" style="left:783px;top:631px;width:158px;height:21px;background:#fff;border:1px solid #7a7a7a;"></div>
<div class="a m" style="left:786px;top:635px;">ASUZ513Y1419B029169W</div>
<div class="a l" style="left:475px;top:662px;">起讫日期</div>
<div class="a" style="left:532px;top:658px;width:178px;height:21px;background:#fff;border:1px solid #7a7a7a;"></div>
<div class="a" style="left:536px;top:662px;width:13px;height:13px;border:1px solid #0078d7;background:#fff"></div>
<svg class="a" style="left:536px;top:662px" width="13" height="13"><polyline points="2.5,6.5 5.2,9.5 10.8,3.2" fill="none" stroke="#0078d7" stroke-width="1.1"/></svg>
<div class="a l" style="left:551px;top:661px;">2019年</div>
<div class="a l" style="left:593px;top:661px;">4月</div>
<div class="a l" style="left:618px;top:661px;">2日</div>
<div class="a l" style="left:648px;top:661px;">0:00</div>
<div class="a" style="left:683px;top:662px;width:11px;height:12px;border:1px solid #8a8a8a;background:#dfe3ea"></div>
<svg class="a" style="left:696px;top:666px" width="8" height="5"><path d="M0,0 L8,0 L4,4 Z" fill="#3c6bb0"/></svg>
<div class="a l" style="left:717px;top:658px;font-size:14px">～</div>
<div class="a" style="left:739px;top:658px;width:70px;height:21px;background:#f0f0f0;border:1px solid #7a7a7a;box-shadow:inset 0 0 0 1px #fff"></div>
<div class="a m" style="left:742px;top:662px;">2020-04-01</div>
<div class="a l" style="left:817px;top:662px;">签单日期</div>
<div class="a" style="left:871px;top:658px;width:70px;height:21px;background:#fff;border:1px solid #7a7a7a;"></div>
<div class="a m" style="left:874px;top:662px;">2019-03-29</div>
<div class="a l" style="left:497px;top:688px;">保费</div>
<div class="a" style="left:532px;top:685px;width:89px;height:21px;background:#fff;border:1px solid #7a7a7a;"></div>
<div class="a m" style="left:535px;top:689px;">2021.30</div>
<div class="a l" style="left:638px;top:688px;">保额</div>
<div class="a" style="left:671px;top:685px;width:93px;height:21px;background:#fff;border:1px solid #7a7a7a;"></div>
<div class="a m" style="left:674px;top:689px;">1088401.00</div>
<div class="a l" style="left:477px;top:716px;">结费比例</div>
<div class="a" style="left:532px;top:712px;width:56px;height:21px;background:#f0f0f0;border:1px solid #7a7a7a;box-shadow:inset 0 0 0 1px #fff"></div>
<div class="a m" style="left:535px;top:716px;">0.00</div>
<div class="a m" style="left:592px;top:719px;font-size:10px">%</div>
<div class="a" style="left:607px;top:715px;width:13px;height:13px;border:1px solid #cccccc;background:#fff"></div>
<div class="a l" style="left:625px;top:716px;color:#a0a0a0;">含税</div>
<div class="a l" style="left:659px;top:716px;">费用额</div>
<div class="a" style="left:703px;top:712px;width:61px;height:21px;background:#f0f0f0;border:1px solid #7a7a7a;box-shadow:inset 0 0 0 1px #fff"></div>
<div class="a m" style="left:706px;top:716px;">0.00</div>
<div class="a l" style="left:776px;top:715px;">出单账号</div>
<div class="a" style="left:831px;top:711px;width:113px;height:22px;background:#fff;border:1px solid #7a7a7a;"></div>
<svg class="a" style="left:929.0px;top:719.5px" width="10" height="7"><polyline points="1,1 5.0,5 9,1" fill="none" stroke="#555" stroke-width="1.1"/></svg>
<div class="a m" style="left:834px;top:716px;max-width:92px;overflow:hidden">50066</div>
<div class="a l" style="left:475px;top:743px;">商业报价说明</div>
<div class="a" style="left:470px;top:767px;width:22px;height:21px;background:#e1e1e1;border:1px solid #adadad;"></div>
<div class="a l" style="left:470px;top:769px;width:22px;text-align:center;color:#000">✕</div>
<div class="a" style="left:556px;top:740px;width:385px;height:49px;background:#fff;border:1px solid #7a7a7a;"></div>
<div class="a m" style="left:559px;top:745px;line-height:10.7px;width:362px;white-space:pre-wrap;transform-origin:0 0">商业险：连续2年没有发生赔款，标准折扣0.401625。无赔款优待及
上年赔款记录0.7，自主渠道系数0.75，自主核保系数0.85，交通违
法系数0.9。</div>
<div class="a" style="left:923px;top:742px;width:17px;height:45px;background:#f0f0f0;"></div>
<svg class="a" style="left:925.5px;top:748.0px" width="10" height="7"><polyline points="1,5 5.0,1 9,5" fill="none" stroke="#bcbcbc" stroke-width="1.1"/></svg>
<svg class="a" style="left:926px;top:776px" width="10" height="6"><polyline points="1,1 5,5 9,1" fill="none" stroke="#bcbcbc" stroke-width="1.1"/></svg>
<div class="a" style="left:967px;top:490px;width:433px;height:308px;border:1px solid #dcdcdc;border-radius:2px"></div>
<div class="a" style="left:971px;top:484px;width:66px;height:13px;background:#f0f0f0;"></div>
<div class="a l" style="left:974px;top:482px;">商业险明细</div>
<div class="a" style="left:1239px;top:484px;width:152px;height:13px;background:#f0f0f0;"></div>
<div class="a l u" style="left:1258px;top:482px;font-size:12px">共有1条报价，点击查看</div>
<div class="a" style="left:969px;top:500px;width:428px;height:24px;background:linear-gradient(#fbfbfb,#eeeeee);border-radius:3px"></div>
<div class="a" style="left:972px;top:505px;width:2px;height:2px;background:#a0a0a0;"></div>
<div class="a" style="left:972px;top:509px;width:2px;height:2px;background:#a0a0a0;"></div>
<div class="a" style="left:972px;top:513px;width:2px;height:2px;background:#a0a0a0;"></div>
<div class="a" style="left:972px;top:517px;width:2px;height:2px;background:#a0a0a0;"></div>
<svg class="a" style="left:982px;top:505px" width="12" height="12"><rect x="0" y="0" width="2" height="12" fill="#b4b4b4"/><path d="M11,0 L3,6 L11,12 Z" fill="#b4b4b4"/></svg>
<svg class="a" style="left:1008px;top:505px" width="8" height="12"><path d="M7,0 L0,6 L7,12 Z" fill="#b4b4b4"/></svg>
<div class="a" style="left:1027px;top:504px;width:1px;height:17px;background:#c8c8c8;"></div>
<div class="a" style="left:1031px;top:501px;width:50px;height:23px;background:#ffffff;"></div>
<div class="a l" style="left:1034px;top:505px;">1</div>
<div class="a l" style="left:1085px;top:505px;">/ 4</div>
<div class="a" style="left:1109px;top:504px;width:1px;height:17px;background:#c8c8c8;"></div>
<svg class="a" style="left:1119px;top:505px" width="8" height="12"><path d="M0,0 L7,6 L0,12 Z" fill="#2a6fd6"/></svg>
<svg class="a" style="left:1141px;top:505px" width="12" height="12"><path d="M0,0 L8,6 L0,12 Z" fill="#2a6fd6"/><rect x="9" y="0" width="2" height="12" fill="#2a6fd6"/></svg>
<div class="a" style="left:1161px;top:504px;width:1px;height:17px;background:#c8c8c8;"></div>
<svg class="a" style="left:1167px;top:505px" width="13" height="13"><path d="M5,0 H8 V5 H13 V8 H8 V13 H5 V8 H0 V5 H5 Z" fill="#f2c230" stroke="#c8901a" stroke-width="0.8"/></svg>
<div class="a l" style="left:1185px;top:505px;">新添</div>
<svg class="a" style="left:1219px;top:505px" width="13" height="13"><path d="M1,1 L12,12 M12,1 L1,12" stroke="#e03020" stroke-width="2"/></svg>
<div class="a l" style="left:1237px;top:505px;">删除</div>
<div class="a" style="left:969px;top:525px;width:428px;height:269px;background:#ababab;border:1px solid #000;"></div>
<div class="a" style="left:970px;top:526px;width:407px;height:112px;background:#ffffff;"></div>
<div class="a" style="left:970px;top:545px;width:407px;height:1px;background:#a0a0a0;"></div>
<div class="a" style="left:990px;top:527px;width:1px;height:111px;background:#a0a0a0;"></div>
<div class="a" style="left:1110px;top:527px;width:1px;height:111px;background:#a0a0a0;"></div>
<div class="a" style="left:1186px;top:527px;width:1px;height:111px;background:#a0a0a0;"></div>
<div class="a" style="left:1256px;top:527px;width:1px;height:111px;background:#a0a0a0;"></div>
<div class="a" style="left:1326px;top:527px;width:1px;height:111px;background:#a0a0a0;"></div>
<div class="a" style="left:1376px;top:526px;width:1px;height:112px;background:#a0a0a0;"></div>
<div class="a l" style="left:997px;top:529px;">条款</div>
<div class="a l" style="left:1117px;top:529px;">条款选项</div>
<div class="a l" style="left:1193px;top:529px;">保额</div>
<div class="a l" style="left:1263px;top:529px;">保费</div>
<div class="a l" style="left:1333px;top:529px;">含不计</div>
<div class="a" style="left:991px;top:546px;width:119px;height:23px;background:#0078d7;"></div>
<div class="a" style="left:970px;top:568px;width:407px;height:1px;background:#a0a0a0;"></div>
<div class="a l" style="left:992px;top:550px;color:#fff;">车辆损失险</div>
<div class="a m" style="left:1111px;top:552px;width:142px;text-align:right">88401.00</div>
<div class="a m" style="left:1187px;top:552px;width:136px;text-align:right">913.44</div>
<div class="a" style="left:1345px;top:551px;width:13px;height:13px;border:1px solid #333;background:#fff"></div>
<div class="a" style="left:991px;top:569px;width:385px;height:23px;background:#f5f5dc;"></div>
<div class="a" style="left:1110px;top:569px;width:1px;height:23px;background:#a0a0a0;"></div>
<div class="a" style="left:1186px;top:569px;width:1px;height:23px;background:#a0a0a0;"></div>
<div class="a" style="left:1256px;top:569px;width:1px;height:23px;background:#a0a0a0;"></div>
<div class="a" style="left:1326px;top:569px;width:1px;height:23px;background:#a0a0a0;"></div>
<div class="a" style="left:970px;top:591px;width:407px;height:1px;background:#a0a0a0;"></div>
<div class="a l" style="left:992px;top:573px;">第三者责任险</div>
<div class="a m" style="left:1111px;top:575px;width:142px;text-align:right">1000000.00</div>
<div class="a m" style="left:1187px;top:575px;width:136px;text-align:right">844.22</div>
<div class="a" style="left:1345px;top:574px;width:13px;height:13px;border:1px solid #333;background:#fff"></div>
<div class="a" style="left:970px;top:614px;width:407px;height:1px;background:#a0a0a0;"></div>
<div class="a l" style="left:992px;top:596px;">不计免赔(车损)</div>
<div class="a m" style="left:1111px;top:598px;width:142px;text-align:right">0.00</div>
<div class="a m" style="left:1187px;top:598px;width:136px;text-align:right">137.01</div>
<div class="a" style="left:1345px;top:597px;width:13px;height:13px;border:1px solid #333;background:#fff"></div>
<div class="a" style="left:991px;top:615px;width:385px;height:23px;background:#f5f5dc;"></div>
<div class="a" style="left:1110px;top:615px;width:1px;height:23px;background:#a0a0a0;"></div>
<div class="a" style="left:1186px;top:615px;width:1px;height:23px;background:#a0a0a0;"></div>
<div class="a" style="left:1256px;top:615px;width:1px;height:23px;background:#a0a0a0;"></div>
<div class="a" style="left:1326px;top:615px;width:1px;height:23px;background:#a0a0a0;"></div>
<div class="a" style="left:970px;top:637px;width:407px;height:1px;background:#a0a0a0;"></div>
<div class="a l" style="left:992px;top:619px;">不计免赔(三者)</div>
<div class="a m" style="left:1111px;top:621px;width:142px;text-align:right">0.00</div>
<div class="a m" style="left:1187px;top:621px;width:136px;text-align:right">126.63</div>
<div class="a" style="left:1345px;top:620px;width:13px;height:13px;border:1px solid #333;background:#fff"></div>
<div class="a" style="left:461px;top:806px;width:73px;height:25px;background:#cccccc;border:1px solid #c4c4c4;"></div>
<div class="a l" style="left:461px;top:811px;width:73px;text-align:center;color:#838383">添加交强险</div>
<div class="a" style="left:542px;top:807px;width:73px;height:25px;background:#cccccc;border:1px solid #c4c4c4;"></div>
<div class="a l" style="left:542px;top:811px;width:73px;text-align:center;color:#838383">添加商业险</div>
<div class="a l" style="left:626px;top:812px;">保费合计：</div>
<div class="a" style="left:685px;top:807px;width:90px;height:23px;background:#f0f0f0;border:1px solid #7a7a7a;"></div>
<div class="a" style="left:688px;top:811px;font-family:'Liberation Mono',monospace;font-weight:bold;font-size:15.6px;line-height:14px">3,081.30</div>
<div class="a b" style="left:464px;top:839px;">支付信息</div>
<div class="a" style="left:534px;top:844px;width:877px;height:1px;background:#000;"></div>
<div class="a" style="left:1307px;top:831px;width:90px;height:25px;background:#cccccc;border:1px solid #c4c4c4;"></div>
<div class="a l" style="left:1307px;top:835px;width:90px;text-align:center;color:#838383">添加支付信息</div>
<div class="a l" style="left:465px;top:864px;">缴费方式</div>
<div class="a" style="left:519px;top:860px;width:117px;height:22px;background:#fff;border:1px solid #cccccc;"></div>
<div class="a" style="left:522px;top:863px;width:96px;height:16px;background:#f0f0f0;"></div>
<svg class="a" style="left:621.0px;top:868.5px" width="10" height="7"><polyline points="1,1 5.0,5 9,1" fill="none" stroke="#bcbcbc" stroke-width="1.1"/></svg>
<div class="a m" style="left:522px;top:865px;color:#6d6d6d;max-width:96px;overflow:hidden">在线支付</div>
<div class="a l" style="left:645px;top:864px;">剩余额度</div>
<div class="a" style="left:702px;top:860px;width:93px;height:21px;background:#f0f0f0;border:1px solid #7a7a7a;box-shadow:inset 0 0 0 1px #fff"></div>
<div class="a l" style="left:803px;top:864px;">刷卡方式</div>
<div class="a" style="left:860px;top:860px;width:137px;height:22px;background:#fff;border:1px solid #cccccc;"></div>
<div class="a" style="left:863px;top:863px;width:116px;height:16px;background:#f0f0f0;"></div>
<svg class="a" style="left:982.0px;top:868.5px" width="10" height="7"><polyline points="1,1 5.0,5 9,1" fill="none" stroke="#bcbcbc" stroke-width="1.1"/></svg>
<div class="a m" style="left:863px;top:865px;color:#6d6d6d;max-width:116px;overflow:hidden">微信</div>
<div class="a l" style="left:1006px;top:864px;">发票类型</div>
<div class="a" style="left:1064px;top:860px;width:152px;height:22px;background:#fff;border:1px solid #7a7a7a;"></div>
<svg class="a" style="left:1201.0px;top:868.5px" width="10" height="7"><polyline points="1,1 5.0,5 9,1" fill="none" stroke="#555" stroke-width="1.1"/></svg>
<div class="a l" style="left:487px;top:890px;">备注</div>
<div class="a" style="left:519px;top:890px;width:276px;height:37px;background:#fff;border:1px solid #7a7a7a;"></div>
<div class="a" style="left:777px;top:892px;width:16px;height:33px;background:#f0f0f0;"></div>
<svg class="a" style="left:779.5px;top:897.0px" width="10" height="7"><polyline points="1,5 5.0,1 9,5" fill="none" stroke="#bcbcbc" stroke-width="1.1"/></svg>
<svg class="a" style="left:780px;top:913px" width="10" height="6"><polyline points="1,1 5,5 9,1" fill="none" stroke="#bcbcbc" stroke-width="1.1"/></svg>
<div class="a l" style="left:802px;top:888px;">发票纳税人地址</div>
<div class="a" style="left:890px;top:884px;width:107px;height:21px;background:#fff;border:1px solid #7a7a7a;"></div>
<div class="a l" style="left:802px;top:912px;">发票纳税人电话</div>
<div class="a" style="left:890px;top:908px;width:107px;height:21px;background:#fff;border:1px solid #7a7a7a;"></div>
<div class="a l" style="left:1006px;top:888px;">发票纳税人开户行名称</div>
<div class="a" style="left:1136px;top:884px;width:80px;height:21px;background:#fff;border:1px solid #7a7a7a;"></div>
<div class="a l" style="left:1006px;top:912px;">发票纳税人开户行账户</div>
<div class="a" style="left:1136px;top:908px;width:80px;height:21px;background:#fff;border:1px solid #7a7a7a;"></div>
<div class="a" style="left:1879px;top:108px;width:18px;height:825px;background:#f0f0f0;"></div>
<div class="a" style="left:1879px;top:108px;width:1px;height:825px;background:#ffffff;"></div>
<div class="a" style="left:1880px;top:125px;width:16px;height:571px;background:#cdcdcd;"></div>
<svg class="a" style="left:1883px;top:113px" width="10" height="7"><polyline points="1,6 5,2 9,6" fill="none" stroke="#606060" stroke-width="1.6"/></svg>
<svg class="a" style="left:1883px;top:919px" width="10" height="7"><polyline points="1,1 5,5 9,1" fill="none" stroke="#606060" stroke-width="1.6"/></svg>
<div class="a" style="left:-9px;top:976px;width:79px;height:25px;background:#e1e1e1;border:1px solid #adadad;"></div>
<div class="a l" style="left:-9px;top:981px;width:79px;text-align:center;color:#000">添加</div>
<div class="a" style="left:78px;top:976px;width:78px;height:25px;background:#e1e1e1;border:1px solid #adadad;"></div>
<div class="a l" style="left:78px;top:981px;width:78px;text-align:center;color:#000">保存</div>
<div class="a" style="left:164px;top:976px;width:78px;height:25px;background:#e1e1e1;border:1px solid #adadad;"></div>
<div class="a l" style="left:164px;top:981px;width:78px;text-align:center;color:#000">提交</div>
<div class="a" style="left:250px;top:976px;width:78px;height:25px;background:#e1e1e1;border:1px solid #adadad;"></div>
<div class="a l" style="left:250px;top:981px;width:78px;text-align:center;color:#000">其他操作</div>
<div class="a" style="left:336px;top:976px;width:78px;height:25px;background:#e1e1e1;border:1px solid #adadad;"></div>
<div class="a l" style="left:336px;top:981px;width:78px;text-align:center;color:#000">结算</div>
<div class="a" style="left:425px;top:976px;width:78px;height:25px;background:#e1e1e1;border:1px solid #adadad;"></div>
<div class="a l" style="left:425px;top:981px;width:78px;text-align:center;color:#000">生成客户</div>
<div class="a l u" style="left:525px;top:980px;">点击打开保险系统</div>
<div class="a" style="left:1733px;top:976px;width:78px;height:25px;background:#e1e1e1;border:1px solid #adadad;"></div>
<div class="a l" style="left:1733px;top:981px;width:78px;text-align:center;color:#000">管理附件</div>
<div class="a" style="left:1817px;top:976px;width:78px;height:25px;background:#e1e1e1;border:1px solid #adadad;"></div>
<div class="a l" style="left:1817px;top:981px;width:78px;text-align:center;color:#000">关闭</div>
<div class="a" style="left:0px;top:1006px;width:1903px;height:1px;background:#a0a0a0;"></div>
<div class="a" style="left:0px;top:1029px;width:1903px;height:40px;background:#0b0b0b;"></div>
<div class="a" style="left:326px;top:1029px;width:48px;height:40px;background:#333333;"></div>
<div class="a" style="left:424px;top:1029px;width:48px;height:40px;background:#2b2b2b;"></div>
<div class="a" style="left:134px;top:1067px;width:40px;height:2px;background:#76b9ed;"></div>
<div class="a" style="left:232px;top:1067px;width:41px;height:2px;background:#76b9ed;"></div>
<div class="a" style="left:281px;top:1067px;width:40px;height:2px;background:#76b9ed;"></div>
<div class="a" style="left:326px;top:1067px;width:48px;height:2px;background:#76b9ed;"></div>
<div class="a" style="left:379px;top:1067px;width:40px;height:2px;background:#76b9ed;"></div>
<div class="a" style="left:424px;top:1067px;width:48px;height:2px;background:#76b9ed;"></div>
<div class="a" style="left:477px;top:1067px;width:40px;height:2px;background:#76b9ed;"></div>
<div class="a" style="left:1898px;top:1029px;width:1px;height:40px;background:#3a3a3a;"></div>
<svg class="a" style="left:0px;top:1041px" width="16" height="16"><path d="M0,2 L7,1 V7.5 H0 Z M8,0.8 L15,0 V7.5 H8 Z M0,8.5 H7 V15 L0,14 Z M8,8.5 H15 V16 L8,15.2 Z" fill="#fff"/></svg>
<svg class="a" style="left:47px;top:1041px" width="16" height="16"><circle cx="7.8" cy="7.9" r="6.6" fill="none" stroke="#fff" stroke-width="1.8"/></svg>
<svg class="a" style="left:95px;top:1040px" width="17" height="17"><g fill="none" stroke="#fff" stroke-width="1.2"><path d="M0.5,1 H11 M0.5,15 H11 M2,4.5 H10 V11.5 H2 Z M15,0 V4 M15,9 V16"/></g><rect x="13.5" y="5" width="3" height="3" fill="#fff"/></svg>
<svg class="a" style="left:143px;top:1040px" width="22" height="18"><path d="M0,2 Q0,1 1,1 H7 L9,3 H21 Q22,3 22,4 V17 H0 Z" fill="#fcd56a"/><rect x="1" y="1.5" width="6" height="1.5" fill="#e8f0f8"/><path d="M5,17 V11 Q5,9 7,9 H15 Q17,9 17,11 V17 H14 V13 H8 V17 Z" fill="#33a6e6"/></svg>
<svg class="a" style="left:191px;top:1037px" width="23" height="23"><path d="M7,6 Q7,1 11.5,1 Q16,1 16,6" fill="none" stroke="#fff" stroke-width="1.5"/><path d="M0.5,5 H22.5 V21 Q22.5,22.5 21,22.5 H2 Q0.5,22.5 0.5,21 Z" fill="#fff"/><rect x="6" y="9" width="5" height="5" fill="#f25022"/><rect x="12" y="9" width="5" height="5" fill="#7fba00"/><rect x="6" y="15" width="5" height="5" fill="#00a4ef"/><rect x="12" y="15" width="5" height="5" fill="#ffb900"/></svg>
<svg class="a" style="left:241px;top:1037px" width="23" height="23"><circle cx="11.5" cy="11.5" r="11" fill="#3f8fe6"/><path d="M15,5 Q8,3 7,8 Q7,11 12,12 Q16,13 15,16 Q13,20 7,18" fill="none" stroke="#fff" stroke-width="2.4"/></svg>
<svg class="a" style="left:288px;top:1039px" width="26" height="20"><ellipse cx="9" cy="7.5" rx="8.5" ry="7" fill="#62c13a"/><path d="M3,12 L2,16 L7,13 Z" fill="#62c13a"/><circle cx="6" cy="6" r="1" fill="#1f5a10"/><circle cx="12" cy="6" r="1" fill="#1f5a10"/><ellipse cx="17" cy="12.5" rx="7.5" ry="6" fill="#f2f2f2"/><path d="M20,17 L22,20 L17,18 Z" fill="#f2f2f2"/><circle cx="14.5" cy="11" r="0.9" fill="#666"/><circle cx="19.5" cy="11" r="0.9" fill="#666"/></svg>
<svg class="a" style="left:338px;top:1037px" width="25" height="24"><defs><linearGradient id="cg" x1="0" y1="0" x2="0" y2="1"><stop offset="0" stop-color="#22b4f8"/><stop offset="1" stop-color="#106ae0"/></linearGradient></defs><rect x="0" y="0" width="24.5" height="24" rx="4" fill="url(#cg)"/><path d="M7.5,9 L9,5 H15.5 L17,9 Q18.5,9.3 18.5,11 V14 H6 V11 Q6,9.3 7.5,9 Z" fill="#fff"/><rect x="9.5" y="6" width="5.5" height="2.5" fill="#1a8be8"/><circle cx="8.6" cy="11.3" r="1" fill="#1a8be8"/><circle cx="15.9" cy="11.3" r="1" fill="#1a8be8"/><path d="M2.5,12 Q3,19 10.5,20.5 L11.5,19 Q6,17.5 5,13 Z M22,12 Q21.5,19 14,20.5 L13,19 Q18.5,17.5 19.5,13 Z" fill="#fff"/></svg>
<svg class="a" style="left:387px;top:1037px" width="25" height="24"><rect x="0" y="0" width="24.5" height="24" rx="4" fill="#1c6df2"/><path d="M12.2,3.5 Q17,5 20,5 Q20,16 12.2,20.5 Q4.5,16 4.5,5 Q7.5,5 12.2,3.5 Z" fill="none" stroke="#fff" stroke-width="2"/><path d="M7,8 L12.2,14 L17.5,8" fill="none" stroke="#fff" stroke-width="2"/></svg>
<svg class="a" style="left:436px;top:1037px" width="24" height="24"><path d="M0,3 L14,0.5 V23.5 L0,21 Z" fill="#1e7145"/><rect x="13" y="3.5" width="10" height="17" fill="#1e7145"/><g stroke="#fff" stroke-width="1"><path d="M15,6 H22 M15,9.5 H22 M15,13 H22 M15,16.5 H22 M18.5,5 V19"/></g><path d="M3,7 L9,17 M9,7 L3,17" stroke="#fff" stroke-width="2"/></svg>
<svg class="a" style="left:485px;top:1037px" width="24" height="24"><circle cx="12" cy="12" r="10" fill="none" stroke="#f3c322" stroke-width="3"/><path d="M4,17 A10,10 0 0 0 20,18" fill="none" stroke="#e8342a" stroke-width="3"/><path d="M14,2.5 A10,10 0 0 1 22,10" fill="none" stroke="#2fae4a" stroke-width="3"/><circle cx="12" cy="12" r="7.5" fill="#fff"/><path d="M8,16 Q8,7 12,7 Q16,7 16,16 Z" fill="#2b8fe0"/></svg>
<svg class="a" style="left:1567px;top:1040px" width="17" height="17"><g fill="none" stroke="#fff" stroke-width="1.1"><circle cx="5.5" cy="8" r="2.6"/><path d="M1,16 Q1,11 5.5,11 Q10,11 10,16"/><circle cx="11.5" cy="4" r="2.6"/><path d="M9,8 Q11.5,6.5 14,7.5 Q16,8.5 16,12"/></g></svg>
<svg class="a" style="left:1605px;top:1044px" width="13" height="9"><polyline points="1,8 6.5,2 12,8" fill="none" stroke="#fff" stroke-width="1.3"/></svg>
<svg class="a" style="left:1627px;top:1041px" width="15" height="17"><ellipse cx="7.5" cy="9" rx="5.5" ry="6.5" fill="#111"/><ellipse cx="7.5" cy="10.5" rx="3.8" ry="4.3" fill="#fff"/><circle cx="5.6" cy="4.5" r="1.3" fill="#fff"/><circle cx="9.4" cy="4.5" r="1.3" fill="#fff"/><path d="M2.5,8 Q7.5,10 12.5,8 L12,10 Q7.5,11.5 3,10 Z" fill="#e02020"/><ellipse cx="4" cy="15.5" rx="2.5" ry="1.2" fill="#f0a010"/><ellipse cx="11" cy="15.5" rx="2.5" ry="1.2" fill="#f0a010"/></svg>
<svg class="a" style="left:1651px;top:1041px" width="17" height="17"><path d="M8.5,1.5 Q12,3 15.5,3 Q15.5,12 8.5,15.5 Q1.5,12 1.5,3 Q5,3 8.5,1.5 Z" fill="none" stroke="#2a7ff5" stroke-width="2.2"/><path d="M4.5,5.5 L8.5,10 L12.5,5.5" fill="none" stroke="#2a7ff5" stroke-width="2"/></svg>
<svg class="a" style="left:1675px;top:1042px" width="18" height="15"><g fill="none" stroke="#fff" stroke-width="1.1"><rect x="4.5" y="1.5" width="12" height="9"/><path d="M10.5,10.5 V13.5 M7,13.5 H14"/><rect x="0.5" y="0.5" width="4" height="4"/><path d="M2.5,4.5 V12"/></g></svg>
<svg class="a" style="left:1698px;top:1042px" width="19" height="16"><path d="M1.5,5 H4 L8,1.5 V13 L4,9.5 H1.5 Z" fill="none" stroke="#fff" stroke-width="1.1"/><circle cx="13" cy="11" r="4.3" fill="#e02828"/><path d="M11,9 L15,13 M15,9 L11,13" stroke="#fff" stroke-width="1.1"/></svg>
<div class="a l" style="left:1724px;top:1042px;color:#fff;font-size:13px">中</div>
<svg class="a" style="left:1750px;top:1041px" width="18" height="17"><path d="M3,1 L16,0 Q18,0 17.5,2 L15,15 Q14.5,17 12.5,17 L2,17 Q0,17 0.5,15 L1,3 Q1.2,1.2 3,1 Z" fill="#f05a1e"/><path d="M12.5,5 Q7,3.5 6,6.5 Q6,8.5 9.5,9 Q12.5,9.5 11.5,11.5 Q10,13.5 5,12" fill="none" stroke="#fff" stroke-width="2.2"/></svg>
<div class="a" style="left:1797px;top:1032px;font-family:'Liberation Sans',sans-serif;font-size:12px;line-height:14px;color:#fff">16:57</div>
<div class="a" style="left:1786px;top:1051px;font-family:'Liberation Sans',sans-serif;font-size:12px;line-height:14px;color:#fff">2019-4-1</div>
<svg class="a" style="left:1861px;top:1040px" width="28" height="26"><path d="M1.5,1.5 H17.5 V12.5 H8 L5,15.5 V12.5 H1.5 Z" fill="#fff"/><g stroke="#111" stroke-width="1"><path d="M4,4.5 H15 M4,7 H15 M4,9.5 H12"/></g><circle cx="16.5" cy="16" r="7.3" fill="#2b2b2b" stroke="#777" stroke-width="1"/></svg>
<div class="a" style="left:1873px;top:1049px;font-family:'Liberation Sans',sans-serif;font-size:11px;line-height:13px;color:#fff;font-weight:bold">2</div></body></html>
